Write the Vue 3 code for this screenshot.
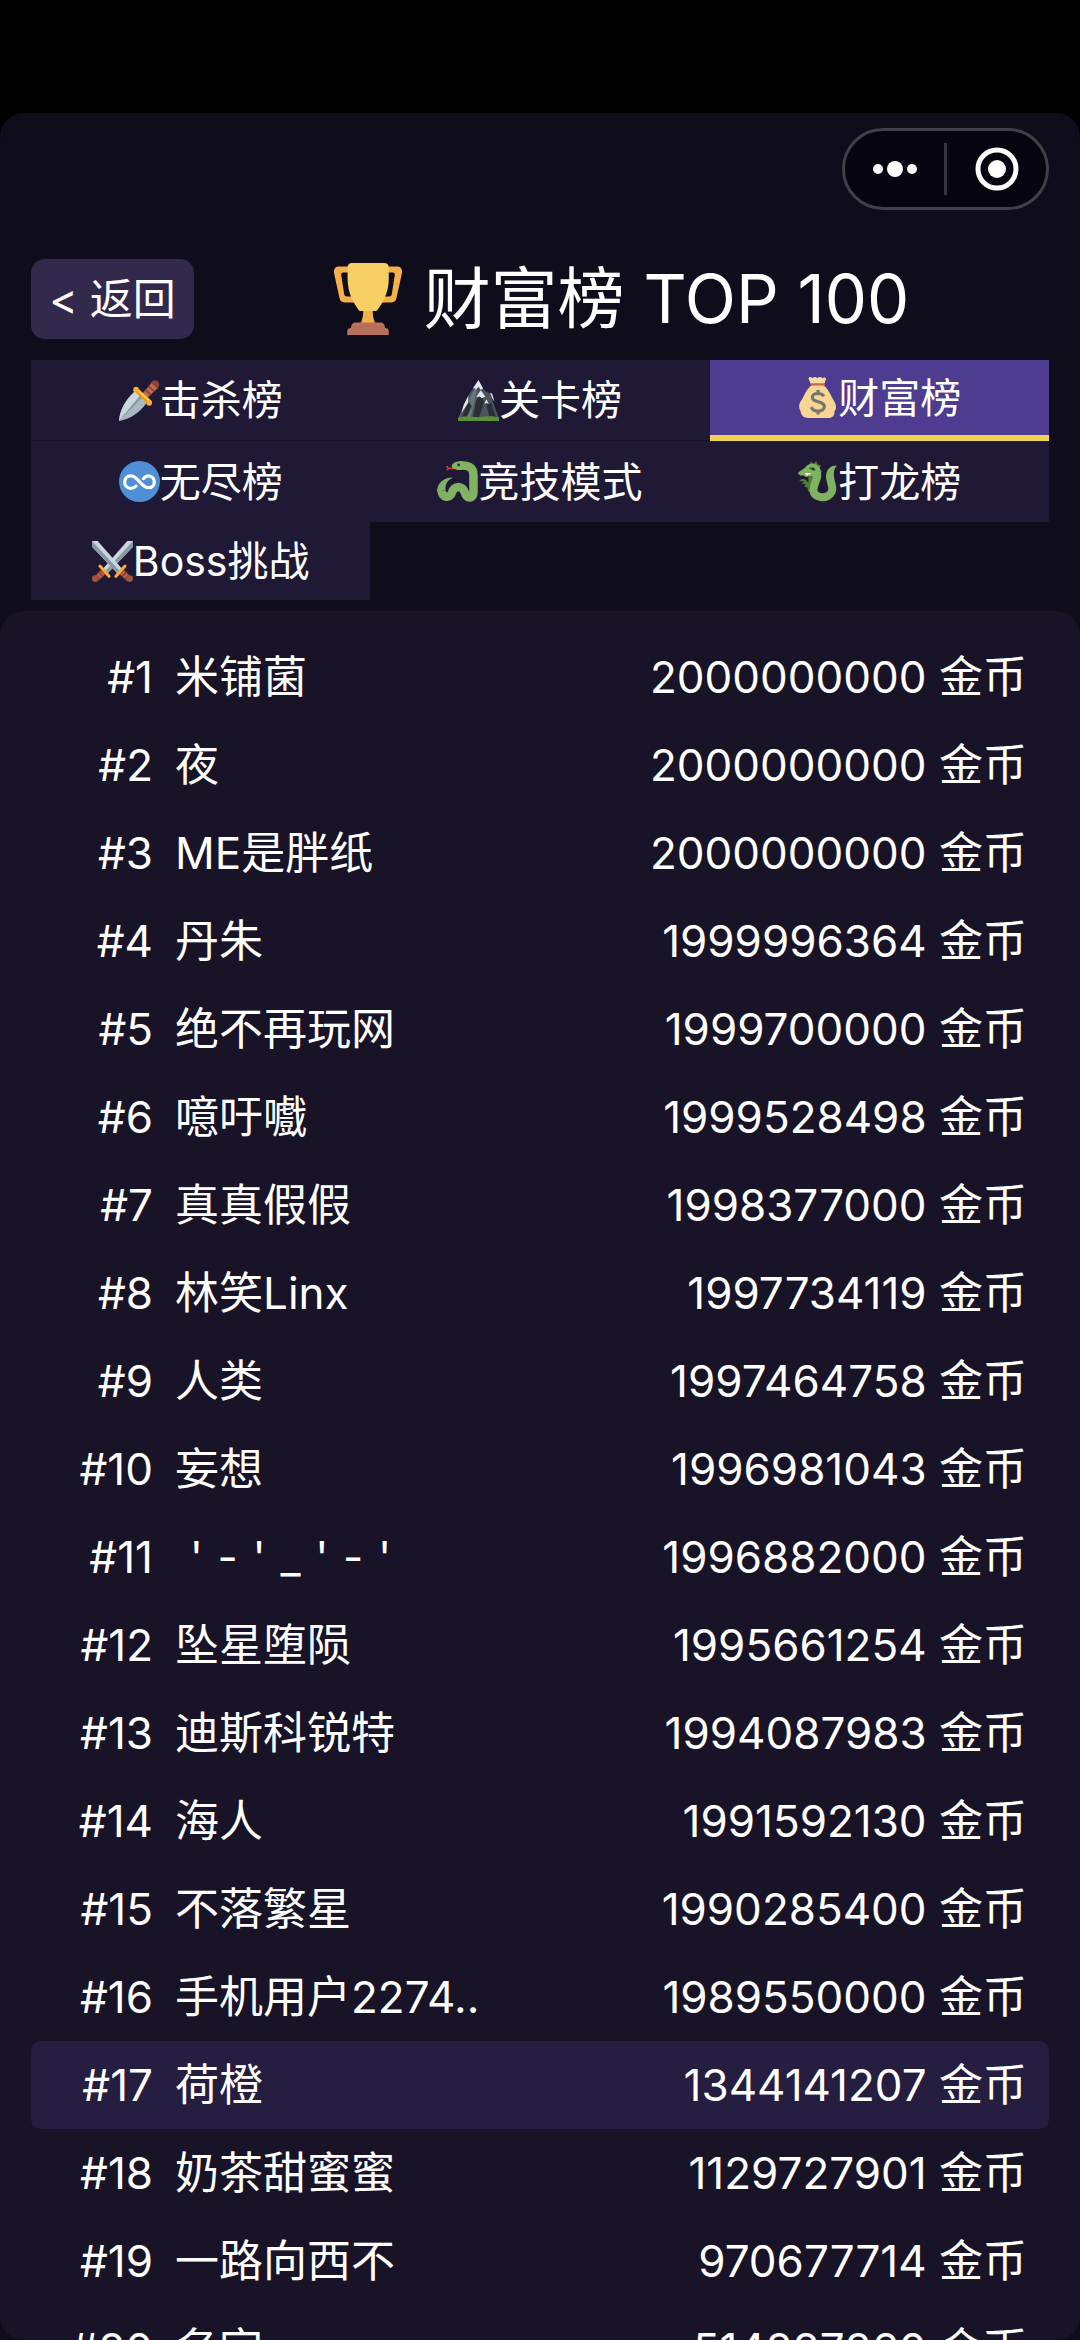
<template>
  <div class="screen">
    <div class="status-bar"></div>

    <main class="page">
      <!-- Mini program capsule -->
      <div class="top-bar">
        <div class="capsule">
          <button class="capsule-btn" aria-label="更多">
            <svg width="46" height="18" viewBox="0 0 46 18" fill="#fff">
              <circle cx="6" cy="9" r="5" />
              <circle cx="23" cy="9" r="8" />
              <circle cx="40" cy="9" r="5" />
            </svg>
          </button>
          <span class="capsule-line"></span>
          <button class="capsule-btn" aria-label="关闭">
            <svg width="44" height="44" viewBox="0 0 44 44">
              <circle cx="22" cy="22" r="19" fill="none" stroke="#fff" stroke-width="5" />
              <circle cx="22" cy="22" r="9" fill="#fff" />
            </svg>
          </button>
        </div>
      </div>

      <header class="header">
        <button class="back">&lt; 返回</button>
        <h1 class="title">
          <svg class="trophy" viewBox="0 0 36 36" preserveAspectRatio="none" aria-hidden="true">
            <path fill="#F5B04C" fill-rule="evenodd" d="M2.600 1.800H9v3H4.800q-1.100 0-1 1.100l1.600 9.700q.2 1.100 1.300 1.100H11v3H5.600q-2.300 0-2.700-2.300L0 5Q-.3 1.800 2.600 1.800zM33.400 1.800H27v3h4.200q1.100 0 1 1.100l-1.600 9.700q-.2 1.100-1.300 1.100H25v3h5.400q2.300 0 2.700-2.300L36 5q.3-3.200-2.600-3.200z" />
            <path fill="#F5B04C" d="M15.500 23h5c0 4 .6 6 2 8h-9c1.400-2 2-4 2-8z" />
            <path fill="#F7CF62" d="M9.500 0h17Q29 0 29 2.500V8c0 7-3.500 12.500-6.500 16h-9C10.500 20.500 7.200 15 7.200 8V2.500Q7.200 0 9.500 0z" />
            <path fill="#B9705A" d="M9 32.500q0-2.800 2.500-2.800h13q2.500 0 2.500 2.800 2 0 2 1.700V36H7v-1.800q0-1.700 2-1.700z" />
          </svg>
          <span>财富榜 TOP 100</span>
        </h1>
      </header>

      <nav class="tabs">
        <button
          v-for="tab in tabs"
          :key="tab.id"
          class="tab"
          :class="{ active: tab.id === activeTab }"
          @click="activeTab = tab.id"
        >
          <svg v-if="tab.id === 'kill'" class="icon" viewBox="0 0 36 36" aria-hidden="true">
            <path fill="#AAB8C2" d="M0 36C1 26 5 18 15 9l10 10C18 29 10 34 0 36z" />
            <path fill="#CCD6DD" d="M0 36C1 26 5 18 15 9l4 4z" />
            <path fill="#8899A6" d="M0 36l19-23 2 2z" />
            <path fill="#C1694F" d="M21 11.500l8-9.500 5 5-9 8.500z" />
            <path stroke="#8A4633" stroke-width="1.500" d="M23 8.500l5 4.500M26 5.500l5 4.500" />
            <path fill="#8A4633" d="M28 2.500c1-2.500 4-3 6-1.500 2 1.800 2 4.500-.5 6.500z" />
            <path stroke="#F4900C" stroke-width="4" d="M15 8.500L27 19.500" />
            <path stroke="#FFCC4D" stroke-width="2" d="M15.500 8L27.500 19" />
            <circle cx="15" cy="8.500" r="2.500" fill="#FFAC33" />
            <circle cx="26.500" cy="20" r="2.500" fill="#FFAC33" />
          </svg>
          <svg v-else-if="tab.id === 'level'" class="icon" viewBox="0 0 36 36" aria-hidden="true">
            <path fill="#4B545D" d="M0 34L7 17l3-5L18 1l5 8 5 3 4 11 4 11z" />
            <path fill="#67757F" d="M18 1l-7 13-3 8-4 12h7l4-18z" />
            <path fill="#292F33" d="M13 34l3-16 4-5 3 6-5 15zM25 22l4-2 5 14h-6zM9 18l3 5-5 11H3z" />
            <path fill="#E1E8ED" d="M18 0l-5 7.500 2-.5.500 1.500L18 6l2 2.500 2-1zM20 9l-4 6 3-.5 2 1.500 3-1.500zM25 17l-2 4 2-1 2 1zM9 14L5 22l-2 7 6-9zM28 11l2 5 2 3-2-7z" />
            <path fill="#5C913B" d="M0 36v-3c8-2 13 0 18-.5 6-.5 12-1.500 18 .5v3z" />
          </svg>
          <svg v-else-if="tab.id === 'wealth'" class="icon" viewBox="0 0 36 36" aria-hidden="true">
            <path fill="#F8D592" d="M13 7C8 11 7 15 4.500 19.500 1 24 1.500 27 3 29.500 3.500 34 6 36 10 36h17c4 0 6-2 6-6 1.500-2 2-5-.5-9C29.500 16 28 11 23 7z" />
            <path fill="#FBD9A5" d="M10 1c1-1.500 2.500-1 3.500 0 1.500-1.500 3-1 4.500 0 1.500-1.500 3-1 4.500 0 1.500-1 3-.5 3 1L23.500 7h-11z" />
            <path fill="#BF6952" d="M12 5.500h12.500v2H12z" />
            <path fill="none" stroke="#72776F" stroke-width="2.800" d="M23.500 17c-1-2-3-2.500-5-2.500-3 0-5 1.300-5 3.500 0 5 10.500 2.500 10.500 8 0 2.500-2.500 4-5.500 4s-5-1-6-3.500M18.500 11.500v3M18.500 30v3" />
          </svg>
          <svg v-else-if="tab.id === 'endless'" class="icon" viewBox="0 0 36 36" aria-hidden="true">
            <circle cx="18" cy="18" r="18" fill="#4E8FD6" />
            <path fill="none" stroke="#fff" stroke-width="2.800" stroke-linecap="round" d="M15 22c-1.300 1.200-2.800 2-4.500 2C7 24 5 21.500 5 18.500S7 13 10.500 13c6 0 9 10.500 15.500 10.500 3 0 5-2.300 5-5s-2-5.500-5-5.500c-1.800 0-3.500 1-4.500 2.500" />
          </svg>
          <svg v-else-if="tab.id === 'arena'" class="icon" viewBox="0 0 36 36" aria-hidden="true">
            <path fill="none" stroke="#DD2E44" stroke-width="1.500" d="M15 6.500h-5L8.500 4.500M10.500 6.500L8.500 8" />
            <path fill="none" stroke="#80B262" stroke-width="7.500" d="M20 4c7-.5 12 1 12 8v16c0 5-6 6-7.500 0-1.500-7-10-7-11.500 0-1 5-9 4.500-9-2" />
            <path fill="#80B262" d="M22 0c-5 0-9 2-9 4.500S18 8 22 8zM0 27c0-7 5-12.500 14-12.500-4 2-7 5-6.500 11z" />
            <circle cx="19" cy="3.500" r="1.200" fill="#292F33" />
          </svg>
          <svg v-else-if="tab.id === 'dragon'" class="icon" viewBox="0 0 36 36" aria-hidden="true">
            <path fill="#4C7F35" d="M10 5l2-4.500 2.500 2L17 0l1 3 3 .5-1 3 2 3-3 3-4 8-3 7c-2 0-3-2-2.500-4l-3-1 1-2-3-.500 1.500-2-4-.500c1-2 4-2.500 6-.500l2 2z" />
            <path fill="none" stroke="#80B262" stroke-width="7" d="M17 9c3 5-3 11-2.500 17 .5 7 13 8 16 1 2-5-2-9-1.500-14" />
            <path fill="#80B262" d="M25.500 14c0-6 3-10 9.500-10-2.500 3-3 6-2.500 10zM1 10l6-4c3-5 12-5 13.500 2l-3 6-6-1-4 1-2-1.500c-2 .5-4.500 0-4.500-2.500z" />
            <path fill="#fff" d="M7 10.500h5l-1 2-1-1-1 2z" />
            <path stroke="#3E721D" stroke-width="1.500" d="M11 6l5 2" />
            <circle cx="14" cy="7" r="1.200" fill="#292F33" />
          </svg>
          <svg v-else class="icon" viewBox="0 0 36 36" aria-hidden="true">
            <g v-for="side in ['right', 'left']" :key="side" :class="side">
              <path fill="#CCD6DD" d="M36 0v5L14 28l-4-4L31 0z" />
              <path fill="#8899A6" d="M36 0v5L14 28l-2-2z" />
              <path fill="#8A4633" d="M3 30l5-5 4 4-6 6z" />
              <path stroke="#C1694F" stroke-width="1.500" d="M5 29l3 3M7.500 27l3 3" />
              <path stroke="#FFAC33" stroke-width="2.600" stroke-linecap="round" d="M7 22l8 9" />
              <circle cx="3" cy="33" r="3" fill="#A0533B" />
            </g>
          </svg>
          <span>{{ tab.label }}</span>
        </button>
      </nav>

      <ol class="ranking">
        <li
          v-for="(player, index) in players"
          :key="index"
          class="row"
          :class="{ me: index + 1 === myRank }"
        >
          <span class="rank">#{{ index + 1 }}</span>
          <span class="name">{{ player.name }}</span>
          <span class="score">{{ player.coins }} 金币</span>
        </li>
      </ol>
    </main>
  </div>
</template>

<script setup>
import { ref } from 'vue';

const tabs = [
  { id: 'kill', label: '击杀榜' },
  { id: 'level', label: '关卡榜' },
  { id: 'wealth', label: '财富榜' },
  { id: 'endless', label: '无尽榜' },
  { id: 'arena', label: '竞技模式' },
  { id: 'dragon', label: '打龙榜' },
  { id: 'boss', label: 'Boss挑战' }
];

const activeTab = ref('wealth');
const myRank = 17;

const players = [
  { name: '米铺菌', coins: 2000000000 },
  { name: '夜', coins: 2000000000 },
  { name: 'ME是胖纸', coins: 2000000000 },
  { name: '丹朱', coins: 1999996364 },
  { name: '绝不再玩网', coins: 1999700000 },
  { name: '噫吁嚱', coins: 1999528498 },
  { name: '真真假假', coins: 1998377000 },
  { name: '林笑Linx', coins: 1997734119 },
  { name: '人类', coins: 1997464758 },
  { name: '妄想', coins: 1996981043 },
  { name: "\u2004'\u2004-\u2004'\u2004_\u2004'\u2004-\u2004'", coins: 1996882000 },
  { name: '坠星堕陨', coins: 1995661254 },
  { name: '迪斯科锐特', coins: 1994087983 },
  { name: '海人', coins: 1991592130 },
  { name: '不落繁星', coins: 1990285400 },
  { name: '手机用户2274..', coins: 1989550000 },
  { name: '荷橙', coins: 1344141207 },
  { name: '奶茶甜蜜蜜', coins: 1129727901 },
  { name: '一路向西不', coins: 970677714 },
  { name: '名字', coins: 514287260 }
];
</script>

<style>
body {
  background: #000;
}
</style>

<style scoped>
.screen {
  display: flex;
  flex-direction: column;
  height: 100vh;
  color: #fff;
  font-family: Inter, "Noto Sans CJK SC", sans-serif;
  font-weight: 400;
}

button {
  padding: 0;
  border: none;
  background: none;
  color: inherit;
  font: inherit;
  cursor: pointer;
}

.status-bar {
  flex: none;
  height: 113px;
}

.page {
  flex: 1;
  min-height: 0;
  display: flex;
  flex-direction: column;
  border-radius: 24px 24px 0 0;
  background: #0f0c1b;
}

.top-bar {
  display: flex;
  justify-content: flex-end;
  padding: 15px 31px 0;
}

.capsule {
  display: flex;
  align-items: center;
  width: 207px;
  height: 82px;
  box-sizing: border-box;
  border: 3px solid #413f4a;
  border-radius: 41px;
  background: #07050f;
}

.capsule-btn {
  flex: 1;
  display: flex;
  align-items: center;
  justify-content: center;
  height: 100%;
}

.capsule-line {
  width: 3px;
  height: 52px;
  background: #36343f;
}

.header {
  display: flex;
  align-items: center;
  padding: 49px 31px 21px;
}

.back {
  width: 163px;
  height: 80px;
  border-radius: 14px;
  background: #32294d;
  font-size: 43px;
  line-height: 80px;
}

.title {
  flex: 1;
  display: flex;
  align-items: center;
  justify-content: center;
  gap: 22px;
  height: 80px;
  margin: 0;
  font-size: 67px;
  font-weight: 400;
  line-height: 80px;
}

.trophy {
  width: 68px;
  height: 72px;
}

.tabs {
  display: grid;
  grid-template-columns: repeat(3, 1fr);
  padding: 0 31px;
}

.tab {
  display: flex;
  align-items: center;
  justify-content: center;
  height: 81px;
  box-sizing: border-box;
  border-bottom: 1px solid #181229;
  background: #201936;
  font-size: 41px;
  line-height: 74px;
}

.tab:nth-child(n + 4) {
  border-bottom: none;
}

.tab:nth-child(7) {
  height: 78px;
}

.tab.active {
  border-bottom: 6px solid #f0d254;
  background: #4d3c8f;
}

.icon {
  width: 41px;
  height: 43px;
}

.left {
  transform: translateX(36px) scaleX(-1);
}

.ranking {
  flex: 1;
  min-height: 0;
  margin: 11px 0 0;
  padding: 22px 31px 0;
  overflow: hidden;
  border-radius: 24px;
  background: #181327;
  list-style: none;
}

.row {
  display: flex;
  align-items: center;
  gap: 22px;
  height: 88px;
  padding: 0 22px 0 0;
  border-radius: 10px;
  font-size: 44px;
  line-height: 88px;
}

.row.me {
  background: #251e41;
}

.rank {
  width: 122px;
  text-align: right;
}

.name {
  flex: 1;
  white-space: pre;
}
</style>
